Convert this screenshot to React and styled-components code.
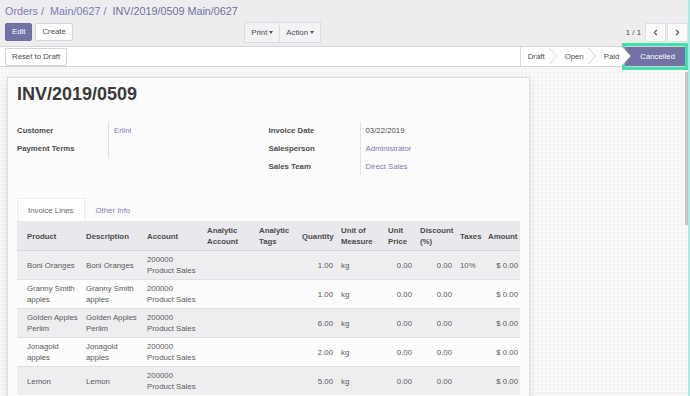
import React from 'react';
import styled, { createGlobalStyle, css } from 'styled-components';
import { ChevronLeft, ChevronRight } from 'lucide-react';

const GlobalStyle = createGlobalStyle`
  html, body {
    margin: 0;
    padding: 0;
  }
  body {
    font-family: "Liberation Sans", Arial, sans-serif;
    font-size: 7.8px;
    color: #4c4c4c;
    background: #f8f8f9;
  }
`;

const Page = styled.div`
  position: relative;
  width: 690px;
  height: 396px;
  overflow: hidden;
  display: flex;
  flex-direction: column;
`;

/* control panel */
const ControlPanel = styled.div`
  background: #ededf0;
  height: 46px;
  box-sizing: border-box;
  padding: 4px 2px 0 5px;
`;

const Breadcrumb = styled.div`
  display: flex;
  font-size: 10.8px;
  line-height: 15px;
  white-space: nowrap;
`;

const Crumb = styled.span`
  color: ${(p) => (p.$active ? '#6f6e98' : '#7c7bad')};
`;

const CrumbSep = styled.span`
  color: #7c7bad;
  padding: 0 3px;
  white-space: pre;
`;

const ButtonRow = styled.div`
  display: flex;
  align-items: center;
  height: 20px;
  margin-top: 3px;
`;

const LeftCluster = styled.div`
  display: flex;
  align-items: center;
  width: 316px;
`;

const Btn = styled.button`
  font-family: inherit;
  font-size: 7.8px;
  height: 18px;
  line-height: 16px;
  padding: 0 6px;
  margin-right: 3px;
  border-radius: 2px;
  border: 1px solid ${(p) => (p.$primary ? '#6d6c9e' : '#d4d4d8')};
  background: ${(p) => (p.$primary ? '#7372a5' : '#ffffff')};
  color: ${(p) => (p.$primary ? '#ffffff' : '#4c4c4c')};
`;

const SidebarGroup = styled.div`
  display: flex;
  margin-left: auto;
  height: 19px;
  border: 1px solid #dcdce0;
  background: #f3f3f5;
`;

const SidebarBtn = styled.div`
  display: flex;
  align-items: center;
  padding: 0 6px;
  color: #4c4c4c;
  & + & {
    border-left: 1px solid #dcdce0;
  }
`;

const Caret = styled.span`
  display: inline-block;
  margin-left: 2px;
  border-top: 3px solid #555;
  border-left: 2.5px solid transparent;
  border-right: 2.5px solid transparent;
`;

const Pager = styled.div`
  display: flex;
  align-items: center;
  margin-left: auto;
`;

const PagerValue = styled.span`
  margin-right: 4px;
  color: #4c4c4c;
`;

const PagerBtn = styled.div`
  display: flex;
  align-items: center;
  justify-content: center;
  width: 21px;
  height: 19px;
  box-sizing: border-box;
  background: #fafafb;
  border: 1px solid #e0e0e4;
  color: #555;
  & + & {
    margin-left: 1px;
  }
`;

/* status bar */
const StatusBar = styled.div`
  display: flex;
  align-items: center;
  height: 21px;
  box-sizing: border-box;
  border-top: 1px solid #d6d6da;
  border-bottom: 1px solid #d0d0d4;
  background: #ffffff;
  padding: 0 5px;
`;

const StatusList = styled.div`
  display: flex;
  margin-left: auto;
  height: 19px;
`;

const StatusItem = styled.div`
  position: relative;
  height: 19px;
  line-height: 19px;
  padding: 0 ${(p) => p.$pr}px 0 ${(p) => p.$pl}px;
  background: ${(p) => (p.$current ? '#7372a5' : 'transparent')};
  color: ${(p) => (p.$current ? '#ffffff' : '#4c4c4c')};
  border-left: ${(p) => (p.$first ? '1px solid #dadada' : 'none')};
  ${(p) =>
    p.$arrow &&
    css`
      &::before,
      &::after {
        content: '';
        position: absolute;
        top: 0;
        border-top: 9.5px solid transparent;
        border-bottom: 9.5px solid transparent;
      }
      &::before {
        right: -8px;
        border-left: 8px solid #d2d2d6;
        z-index: 1;
      }
      &::after {
        right: -7px;
        border-left: 8px solid #ffffff;
        z-index: 2;
      }
    `}
`;

/* form */
const FormArea = styled.div`
  flex: 1;
  background-color: #f9f9fa;
  background-image: radial-gradient(circle, #e6e6e9 0.6px, transparent 0.8px);
  background-size: 4px 4px;
  padding: 10px 0 0 7px;
  overflow: hidden;
`;

const Sheet = styled.div`
  width: 523px;
  height: 340px;
  box-sizing: border-box;
  background: #fcfcfc;
  border: 1px solid #dedee0;
  box-shadow: 0 3px 8px rgba(0, 0, 0, 0.1);
  padding: 5px 9px 0 9px;
`;

const Title = styled.h1`
  margin: 0;
  font-size: 18px;
  line-height: 22px;
  font-weight: bold;
  color: #3a3a3a;
`;

const Groups = styled.div`
  display: grid;
  grid-template-columns: 1fr 1fr;
  margin-top: 17px;
`;

const Group = styled.div`
  display: grid;
  grid-template-columns: 91px 1fr;
  grid-auto-rows: 18px;
  align-content: start;
`;

const Label = styled.div`
  font-weight: bold;
  line-height: 18px;
  color: #4c4c4c;
`;

const Value = styled.div`
  line-height: 18px;
  padding-left: 5px;
  border-left: 1px solid #e2e2e6;
  color: ${(p) => (p.$link ? '#7c7bad' : '#4c4c4c')};
`;

const Tabs = styled.div`
  display: flex;
  margin-top: 22px;
  height: 23px;
`;

const Tab = styled.div`
  padding: 0 10px;
  line-height: 23px;
  border: 1px solid ${(p) => (p.$active ? '#ececef' : 'transparent')};
  border-bottom: none;
  background: ${(p) => (p.$active ? '#ffffff' : 'transparent')};
  color: ${(p) => (p.$active ? '#666666' : '#7c7bad')};
`;

const Table = styled.table`
  width: 503px;
  table-layout: fixed;
  border-collapse: collapse;
`;

const Th = styled.th`
  text-align: left;
  font-weight: bold;
  color: #4c4c4c;
  background: #e9e9ed;
  line-height: 11px;
  padding: 4px ${(p) => (p.$last ? 2 : 4)}px 3px ${(p) => (p.$first ? 10 : 4)}px;
  border-bottom: 1px solid #d6d6dc;
  vertical-align: middle;
  white-space: ${(p) => (p.$nowrap ? 'nowrap' : 'normal')};
`;

const Row = styled.tr`
  background: ${(p) => (p.$odd ? '#eeeef1' : '#fcfcfc')};
`;

const Td = styled.td`
  text-align: ${(p) => (p.$num ? 'right' : 'left')};
  color: #5a5a5a;
  line-height: 11px;
  padding: 3px ${(p) => (p.$last ? 2 : 4)}px 3px ${(p) => (p.$first ? 10 : 4)}px;
  border-top: 1px solid #e2e2e6;
  vertical-align: middle;
  white-space: nowrap;
`;

const Highlight = styled.div`
  position: absolute;
  left: 622px;
  top: 43px;
  width: 66px;
  height: 27px;
  box-sizing: border-box;
  border: 3px solid #3fe2a8;
  pointer-events: none;
`;

const EdgeStrip = styled.div`
  position: absolute;
  right: 0;
  top: 0;
  bottom: 0;
  width: 2px;
  background: #a9eee6;
`;

const ScrollThumb = styled.div`
  position: absolute;
  right: 2px;
  top: 72px;
  width: 3px;
  height: 153px;
  background: #c4c4c8;
`;

const columns = [
  { title: 'Product', width: 65 },
  { title: 'Description', width: 61 },
  { title: 'Account', width: 60 },
  { title: 'Analytic Account', width: 52 },
  { title: 'Analytic Tags', width: 43 },
  { title: 'Quantity', width: 39, nowrap: true },
  { title: 'Unit of Measure', width: 47 },
  { title: 'Unit Price', width: 32 },
  { title: 'Discount (%)', width: 40 },
  { title: 'Taxes', width: 28, nowrap: true },
  { title: 'Amount', width: 36, nowrap: true },
];

const lines = [
  { name: ['Boni Oranges'], qty: '1.00', tax: '10%' },
  { name: ['Granny Smith', 'apples'], qty: '1.00', tax: '' },
  { name: ['Golden Apples', 'Perlim'], qty: '6.00', tax: '' },
  { name: ['Jonagold', 'apples'], qty: '2.00', tax: '' },
  { name: ['Lemon'], qty: '5.00', tax: '' },
];

const crumbs = ['Orders', 'Main/0627', 'INV/2019/0509 Main/0627'];

const Lines = ({ items }) =>
  items.map((t, i) => (
    <React.Fragment key={i}>
      {i > 0 && <br />}
      {t}
    </React.Fragment>
  ));

const stages = ['Draft', 'Open', 'Paid', 'Cancelled'];

const App = () => {
  return (
    <Page>
      <GlobalStyle />
      <ControlPanel>
        <Breadcrumb>
          {crumbs.map((c, i) => (
            <React.Fragment key={c}>
              {i > 0 && <CrumbSep>{'/ '}</CrumbSep>}
              <Crumb $active={i === crumbs.length - 1}>{c}</Crumb>
            </React.Fragment>
          ))}
        </Breadcrumb>
        <ButtonRow>
          <LeftCluster>
            <Btn $primary>Edit</Btn>
            <Btn>Create</Btn>
            <SidebarGroup>
              <SidebarBtn>
                Print
                <Caret />
              </SidebarBtn>
              <SidebarBtn>
                Action
                <Caret />
              </SidebarBtn>
            </SidebarGroup>
          </LeftCluster>
          <Pager>
            <PagerValue>1 / 1</PagerValue>
            <PagerBtn>
              <ChevronLeft size={9} strokeWidth={3} />
            </PagerBtn>
            <PagerBtn>
              <ChevronRight size={9} strokeWidth={3} />
            </PagerBtn>
          </Pager>
        </ButtonRow>
      </ControlPanel>

      <StatusBar>
        <Btn>Reset to Draft</Btn>
        <StatusList>
          {stages.map((s, i) => {
            const first = i === 0;
            const last = i === stages.length - 1;
            return (
              <StatusItem
                key={s}
                $first={first}
                $arrow={!last}
                $current={last}
                $pl={first ? 7 : last ? 17 : 16}
                $pr={last ? 10 : 4}
              >
                {s}
              </StatusItem>
            );
          })}
        </StatusList>
      </StatusBar>

      <FormArea>
        <Sheet>
          <Title>INV/2019/0509</Title>
          <Groups>
            <Group>
              <Label>Customer</Label>
              <Value $link>Erlini</Value>
              <Label>Payment Terms</Label>
              <Value />
            </Group>
            <Group>
              <Label>Invoice Date</Label>
              <Value>03/22/2019</Value>
              <Label>Salesperson</Label>
              <Value $link>Administrator</Value>
              <Label>Sales Team</Label>
              <Value $link>Direct Sales</Value>
            </Group>
          </Groups>

          <Tabs>
            <Tab $active>Invoice Lines</Tab>
            <Tab>Other Info</Tab>
          </Tabs>
          <Table>
            <colgroup>
              {columns.map((c) => (
                <col key={c.title} style={{ width: c.width }} />
              ))}
            </colgroup>
            <thead>
              <tr>
                {columns.map((c, i) => (
                  <Th
                    key={c.title}
                    $first={i === 0}
                    $last={i === columns.length - 1}
                    $nowrap={c.nowrap}
                  >
                    {c.title}
                  </Th>
                ))}
              </tr>
            </thead>
            <tbody>
              {lines.map((l, i) => (
                <Row key={i} $odd={i % 2 === 0}>
                  <Td $first>
                    <Lines items={l.name} />
                  </Td>
                  <Td>
                    <Lines items={l.name} />
                  </Td>
                  <Td>
                    <Lines items={['200000', 'Product Sales']} />
                  </Td>
                  <Td />
                  <Td />
                  <Td $num>{l.qty}</Td>
                  <Td>kg</Td>
                  <Td $num>0.00</Td>
                  <Td $num>0.00</Td>
                  <Td>{l.tax}</Td>
                  <Td $num $last>
                    $ 0.00
                  </Td>
                </Row>
              ))}
            </tbody>
          </Table>
        </Sheet>
      </FormArea>

      <Highlight />
      <ScrollThumb />
      <EdgeStrip />
    </Page>
  );
};

export default App;
